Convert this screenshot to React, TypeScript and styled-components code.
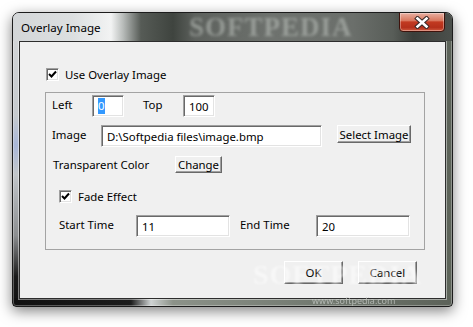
import React from 'react';
import styled, { createGlobalStyle } from 'styled-components';

const GlobalStyle = createGlobalStyle`
  html, body {
    margin: 0;
    padding: 0;
    background: #ffffff;
  }
  body {
    font-family: "Noto Sans", "DejaVu Sans", sans-serif;
    font-size: 11.4px;
    color: #000;
  }
`;

const Page = styled.div`
  width: 473px;
  height: 327px;
  box-sizing: border-box;
  padding: 12px 0 0 12px;
  overflow: hidden;
`;

// window frame (glass look)
const Window = styled.div`
  position: relative;
  width: 441px;
  height: 295px;
  box-sizing: border-box;
  display: flex;
  flex-direction: column;
  border: 1px solid #1c1c1c;
  border-radius: 7px 7px 4px 4px;
  box-shadow: 0 4px 14px rgba(0, 0, 0, 0.5), inset 0 0 0 1px rgba(255, 255, 255, 0.3);
  background:
    linear-gradient(to right, #101010 0, #1c1c1c 118px, #cfd3d3 138px, #8c9289 160px, #737a71 300px, #5c6259 439px) left bottom / 100% 8px no-repeat,
    linear-gradient(to bottom, #8a9086 0, #5c6359 10%, #5d6459 100%) right top / 8px 100% no-repeat,
    linear-gradient(to bottom, #d6d8da 0%, #c6cacd 35%, #a9b7d8 45%, #c2c6ca 55%, #8c8e90 76%, #1a1a1a 90%, #111 100%);
  overflow: hidden;
`;

const TitleBar = styled.div`
  position: relative;
  height: 28px;
  flex: none;
  display: flex;
  align-items: flex-start;
  padding-left: 8px;
  overflow: hidden;
  background: linear-gradient(to right, #d3d6d8 0, #dcdfe0 60px, #f2f3f3 98px, #b8bcba 110px, #565b56 128px, #3f443f 160px, #5d615d 182px, #6e726e 260px, #6b6f6b 340px, #585d58 380px, #3b3f3b 400px, #4b4f4b 439px);
`;

const TitleText = styled.span`
  position: relative;
  z-index: 1;
  margin-top: 7px;
  font-size: 11.6px;
  line-height: 15px;
  color: #000;
`;

const Watermark = styled.span<{ $size: number; $color: string; $blur?: number }>`
  position: absolute;
  font-family: "Liberation Serif", "DejaVu Serif", serif;
  font-weight: bold;
  font-size: ${({ $size }) => $size}px;
  line-height: ${({ $size }) => $size}px;
  letter-spacing: 1px;
  color: ${({ $color }) => $color};
  filter: blur(${({ $blur }) => $blur ?? 1}px);
  pointer-events: none;
  white-space: nowrap;
`;

const SiteMark = styled.span`
  position: absolute;
  left: 299px;
  top: 283px;
  font-size: 9px;
  line-height: 10px;
  color: rgba(200, 204, 200, 0.75);
  filter: blur(0.3px);
  white-space: nowrap;
  pointer-events: none;
`;

const CloseButton = styled.div`
  position: relative;
  z-index: 1;
  margin: -1px 7px 0 auto;
  width: 46px;
  height: 20px;
  box-sizing: border-box;
  border: 1px solid #3e120b;
  border-radius: 0 0 4px 4px;
  display: flex;
  align-items: center;
  justify-content: center;
  background: linear-gradient(to bottom, #e9b0a2 0%, #d9785f 42%, #c23a21 50%, #b4301b 80%, #cf5a3f 100%);
  box-shadow: inset 0 0 0 1px rgba(255, 255, 255, 0.35);
`;

const Client = styled.div`
  flex: 1;
  margin: 0 6px 7px 6px;
  border: 1px solid #2d2d2d;
  box-shadow: 0 0 0 1px rgba(255, 255, 255, 0.45);
  background: #f0f0f0;
  display: flex;
  flex-direction: column;
  padding: 26px 0 0 26px;
`;

const CheckRow = styled.div<{ $left?: number; $top?: number }>`
  display: flex;
  align-items: center;
  gap: 6px;
  height: 13px;
  margin-left: ${({ $left }) => $left ?? 0}px;
  margin-top: ${({ $top }) => $top ?? 0}px;
  line-height: 13px;
`;

const Box = styled.div`
  width: 13px;
  height: 13px;
  box-sizing: border-box;
  background: #fff;
  border-top: 1px solid #a0a0a0;
  border-left: 1px solid #a0a0a0;
  border-right: 1px solid #fff;
  border-bottom: 1px solid #fff;
  box-shadow: inset 1px 1px 0 #696969, inset -1px -1px 0 #e3e3e3;
  display: flex;
  align-items: center;
  justify-content: center;
`;

const Group = styled.div`
  margin: 11px 0 0 -1px;
  width: 380px;
  height: 158px;
  box-sizing: border-box;
  border: 1px solid #a3a3a3;
  padding: 2px 0 0 6px;
  display: flex;
  flex-direction: column;
`;

const Row = styled.div<{ $top?: number; $center?: boolean }>`
  display: flex;
  align-items: ${({ $center }) => ($center ? 'center' : 'flex-start')};
  margin-top: ${({ $top }) => $top ?? 0}px;
`;

const Label = styled.span<{ $w: number; $pt?: number; $ml?: number }>`
  flex: none;
  width: ${({ $w }) => $w}px;
  padding-top: ${({ $pt }) => $pt ?? 0}px;
  margin-left: ${({ $ml }) => $ml ?? 0}px;
  line-height: 15px;
  white-space: nowrap;
`;

const Field = styled.div<{ $w: number }>`
  flex: none;
  width: ${({ $w }) => $w}px;
  height: 22px;
  box-sizing: border-box;
  background: #fff;
  border-top: 1px solid #a0a0a0;
  border-left: 1px solid #a0a0a0;
  border-right: 1px solid #fff;
  border-bottom: 1px solid #fff;
  box-shadow: inset 1px 1px 0 #696969, inset -1px -1px 0 #e3e3e3;
  padding: 0 0 0 5px;
  display: flex;
  align-items: center;
  white-space: nowrap;
  overflow: hidden;
`;

const Selected = styled.span`
  background: #3399ff;
  color: #fff;
  line-height: 16px;
`;

const Button = styled.div<{ $w: number; $h: number; $ml?: number }>`
  flex: none;
  width: ${({ $w }) => $w}px;
  height: ${({ $h }) => $h}px;
  margin-left: ${({ $ml }) => $ml ?? 0}px;
  box-sizing: border-box;
  background: #f0f0f0;
  border-top: 1px solid #fff;
  border-left: 1px solid #fff;
  border-right: 1px solid #696969;
  border-bottom: 1px solid #696969;
  box-shadow: inset -1px -1px 0 #a0a0a0;
  display: flex;
  align-items: center;
  justify-content: center;
  white-space: nowrap;
`;

const Footer = styled.div`
  display: flex;
  justify-content: flex-end;
  gap: 15px;
  margin-top: 11px;
  padding-right: 28px;
`;

const Check = () => (
  <svg width="9" height="9" viewBox="0 0 9 9">
    <path d="M1 4 L3.5 6.5 L8 1.5" fill="none" stroke="#000" strokeWidth="2" />
  </svg>
);

const CloseGlyph = () => (
  <svg width="16" height="13" viewBox="0 0 16 13">
    <path d="M3.5 2.5 L12.5 10.5 M12.5 2.5 L3.5 10.5" stroke="#3a2a28" strokeWidth="4.6" strokeLinecap="square" />
    <path d="M3.5 2.5 L12.5 10.5 M12.5 2.5 L3.5 10.5" stroke="#fff" strokeWidth="2.6" strokeLinecap="square" />
  </svg>
);

export default function App() {
  return (
    <>
      <GlobalStyle />
      <Page>
        <Window>
          <TitleBar>
            <Watermark $size={27} $blur={1.6} $color="rgba(190, 194, 190, 0.55)" style={{ left: 176, top: 1 }}>
              SOFTPEDIA
            </Watermark>
            <TitleText>Overlay Image</TitleText>
            <CloseButton>
              <CloseGlyph />
            </CloseButton>
          </TitleBar>

          <Client>
            <CheckRow>
              <Box><Check /></Box>
              <span>Use Overlay Image</span>
            </CheckRow>

            <Group>
              <Row>
                <Label $w={40} $pt={2}>Left</Label>
                <Field $w={32}><Selected>0</Selected></Field>
                <Label $w={40} $pt={2} $ml={19}>Top</Label>
                <Field $w={32}>100</Field>
              </Row>
              <Row $top={8}>
                <Label $w={49} $pt={2}>Image</Label>
                <Field $w={221}>D:\Softpedia files\image.bmp</Field>
                <Button $w={74} $h={18} $ml={15}>Select Image</Button>
              </Row>
              <Row $top={9} $center>
                <Label $w={122} $ml={1}>Transparent Color</Label>
                <Button $w={47} $h={17}>Change</Button>
              </Row>
              <CheckRow $left={7} $top={17}>
                <Box><Check /></Box>
                <span>Fade Effect</span>
              </CheckRow>
              <Row $top={12}>
                <Label $w={77} $pt={2} $ml={7}>Start Time</Label>
                <Field $w={94}>11</Field>
                <Label $w={76} $pt={2} $ml={10}>End Time</Label>
                <Field $w={94}>20</Field>
              </Row>
            </Group>

            <Footer>
              <Button $w={59} $h={23}>OK</Button>
              <Button $w={59} $h={23}>Cancel</Button>
            </Footer>
          </Client>

          <Watermark $size={28} $color="rgba(255, 255, 255, 0.5)" style={{ left: 240, top: 248 }}>
            SOFTPEDIA
          </Watermark>
          <SiteMark>www.softpedia.com</SiteMark>
        </Window>
      </Page>
    </>
  );
}
